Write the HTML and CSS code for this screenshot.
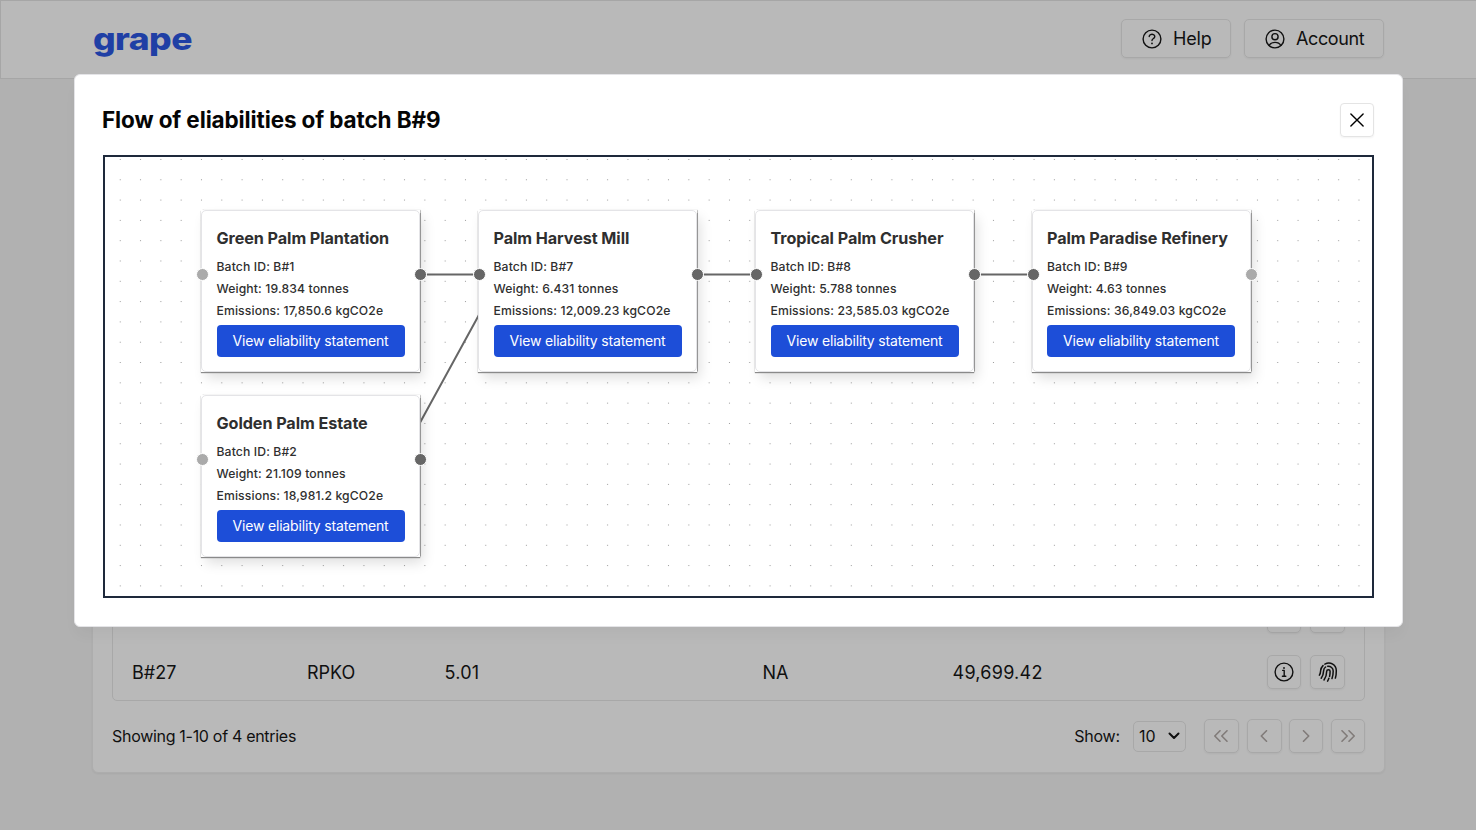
FILE: index.html
```
<!DOCTYPE html>
<html lang="en">
<head>
<meta charset="utf-8">
<title>grape</title>
<link rel="stylesheet" href="styles.css">
</head>
<body>
<div class="page">
  <header class="topbar">
    <div class="logo">grape</div>
    <nav class="topnav">
      <button class="btn help"><svg class="ico20" viewBox="0 0 20 20"><circle cx="10" cy="10" r="8.9"/><path d="M7.200 7.500a2.800 2.300 0 1 1 4.200 2c-1 .6-1.400 1-1.400 2.100"/><circle class="dot" cx="10" cy="14.400" r=".9"/></svg><span>Help</span></button>
      <button class="btn account"><svg class="ico20" viewBox="0 0 20 20"><circle cx="10" cy="10" r="8.9"/><circle cx="10" cy="7.7" r="3.1"/><path d="M4.200 16.400c1.200-2.200 3.200-3 5.800-3s4.600.8 5.800 3"/></svg><span>Account</span></button>
    </nav>
  </header>
  <main class="panel">
    <div class="table">
      <div class="row">
        <span></span><span></span><span></span><span></span><span></span>
        <span class="actions"><button class="sq"></button><button class="sq wide"></button></span>
      </div>
      <div class="row">
        <span>B#27</span><span>RPKO</span><span class="spaced">5.01</span><span>NA</span><span class="spaced">49,699.42</span>
        <span class="actions">
          <button class="sq"><svg class="ico20" viewBox="0 0 20 20"><circle cx="10" cy="10" r="8.9"/><path d="M8.700 8.400h1.500v5.600M8.400 14.200h3.400"/><circle class="dot" cx="10" cy="6" r=".9"/></svg></button>
          <button class="sq wide"><svg class="ico20 print" viewBox="0 0 20 20"><path d="M1.400 13.200C2.500 11.500 2.500 10 2.600 8.700 2.800 6.500 3.700 4.900 5 3.600M6.900 2.100C12.500-.8 18.300 3 18.300 8.700c0 3-.1 5-.9 7.400M3.200 16.200c2-2.600 2.300-4.700 2.400-7.300.1-1.800.8-3.100 2-3.900M9.700 4.300c3-.2 5.500 1.900 5.500 4.800 0 3.300-.4 5.300-1.200 7.500M6 18c2-2.800 2.700-5.300 2.700-8.700 0-2.200 3.400-2.200 3.400 0 0 2-.1 3.400-.5 5M10.900 16.300c-.4 1.100-.8 2-1.300 2.900"/></svg></button>
        </span>
      </div>
    </div>
    <div class="footer">
      <span class="count">Showing 1-10 of 4 entries</span>
      <span class="show">Show:</span>
      <div class="select"><span>10</span><svg viewBox="0 0 12 8"><path d="M1.500 1.500 6 6l4.500-4.500"/></svg></div>
      <div class="pager">
        <button class="sq wide"><svg viewBox="0 0 16 12"><path d="M7 .8 1.800 6 7 11.200M14 .8 8.800 6l5.200 5.200"/></svg></button>
        <button class="sq wide"><svg viewBox="0 0 16 12"><path d="M10.500.8 5.300 6l5.200 5.200"/></svg></button>
        <button class="sq"><svg viewBox="0 0 16 12"><path d="M5.500.8 10.700 6l-5.200 5.200"/></svg></button>
        <button class="sq"><svg viewBox="0 0 16 12"><path d="M2 .8 7.200 6 2 11.200M9 .8 14.200 6 9 11.200"/></svg></button>
      </div>
    </div>
  </main>
</div>

<div class="modal">
  <div class="modal-head">
    <h1>Flow of eliabilities of batch B#9</h1>
    <button class="close"><svg viewBox="0 0 14 14"><path d="M.9.900l12.200 12.200M13.100.900.9 13.100"/></svg></button>
  </div>
  <div class="canvas">
    <svg class="edges" width="1267" height="439">
      <defs><pattern id="dots" x="5.100" y="-7.700" width="20.307" height="20.307" patternUnits="userSpaceOnUse"><circle cx="10.150" cy="10.150" r=".58"/></pattern></defs>
      <rect width="1267" height="439" fill="url(#dots)"/>
      <path d="M322 117.500h46M599 117.500h46M876 117.500h46M314 267.500 375 156"/>
    </svg>
    <article class="node n1">
      <i class="handle in faded"></i><i class="handle out"></i>
      <h2>Green Palm Plantation</h2><p>Batch ID: B#1</p><p>Weight: 19.834 tonnes</p><p>Emissions: 17,850.6 kgCO2e</p><button>View eliability statement</button>
    </article>
    <article class="node n2">
      <i class="handle in faded"></i><i class="handle out"></i>
      <h2>Golden Palm Estate</h2><p>Batch ID: B#2</p><p>Weight: 21.109 tonnes</p><p>Emissions: 18,981.2 kgCO2e</p><button>View eliability statement</button>
    </article>
    <article class="node n3">
      <i class="handle in"></i><i class="handle out"></i>
      <h2>Palm Harvest Mill</h2><p>Batch ID: B#7</p><p>Weight: 6.431 tonnes</p><p>Emissions: 12,009.23 kgCO2e</p><button>View eliability statement</button>
    </article>
    <article class="node n4">
      <i class="handle in"></i><i class="handle out"></i>
      <h2>Tropical Palm Crusher</h2><p>Batch ID: B#8</p><p>Weight: 5.788 tonnes</p><p>Emissions: 23,585.03 kgCO2e</p><button>View eliability statement</button>
    </article>
    <article class="node n5">
      <i class="handle in"></i><i class="handle out faded"></i>
      <h2>Palm Paradise Refinery</h2><p>Batch ID: B#9</p><p>Weight: 4.63 tonnes</p><p>Emissions: 36,849.03 kgCO2e</p><button>View eliability statement</button>
    </article>
  </div>
</div>
</body>
</html>
```
FILE: styles.css
```
* { box-sizing: border-box; }
body { margin: 0; height: 830px; overflow: hidden; background: #b1b1b1; color: #101010; font-family: Inter, sans-serif; font-size: 18px; }
button { font: inherit; color: inherit; margin: 0; padding: 0; background: none; }
svg { display: block; fill: none; stroke: currentColor; stroke-width: 1.4; stroke-linecap: round; stroke-linejoin: round; }
.dot { fill: currentColor; stroke: none; }
.ico20 { width: 20px; height: 20px; flex: none; }
.print { stroke-width: 1.5; }

.page { height: 830px; display: flex; flex-direction: column; }
.topbar { height: 79px; flex: none; display: flex; justify-content: space-between; align-items: flex-start; padding: 18px 92px 0 92px; background: #b9b9b9; border: 1px solid #a6a6a6; border-right: 0; }
.logo { color: #1f3fa5; font-size: 31px; font-weight: 800; line-height: 39px; letter-spacing: -0.5px; transform: scaleX(1.145); transform-origin: 0 0; }
.topnav { display: flex; gap: 13px; }
.btn { height: 39px; display: flex; align-items: center; gap: 11px; padding: 0 0 0 20px; border: 1px solid #a8a8a8; border-radius: 5px; box-shadow: 0 1px 2px rgba(0,0,0,.05); white-space: nowrap; letter-spacing: -.2px; }
.help { width: 110px; }
.account { width: 140px; letter-spacing: -.4px; }

.panel { margin: 30px 91px 0 92px; height: 664px; display: flex; flex-direction: column; justify-content: flex-end; padding: 0 19px 19px; background: #b9b9b9; border: 1px solid #adadad; border-radius: 6px; box-shadow: 0 1px 2px rgba(0,0,0,.05); }
.table { flex: 1; display: flex; flex-direction: column; justify-content: flex-end; margin-bottom: 18px; border: 1px solid #a8a8a8; border-radius: 5px; }
.row { height: 56px; display: grid; grid-template-columns: 175px 137.5px 318px 190px 1fr auto; align-items: center; padding: 0 19px; }
.spaced { letter-spacing: .25px; }
.actions { display: flex; gap: 9px; }
.sq { width: 34px; height: 34px; display: flex; align-items: center; justify-content: center; border: 1px solid #a8a8a8; border-radius: 5px; box-shadow: 0 1px 2px rgba(0,0,0,.05); }
.wide { width: 35px; }
.footer { display: flex; align-items: center; font-size: 16px; letter-spacing: -.3px; }
.count { flex: 1; }
.show { margin-right: 13px; letter-spacing: -.2px; }
.select { width: 53px; height: 31px; display: flex; align-items: center; justify-content: space-between; padding: 0 5px 0 5px; margin-right: 18px; border: 1px solid #a8a8a8; border-radius: 5px; letter-spacing: 0; }
.select svg { width: 12px; height: 8px; stroke-width: 2; }
.pager { display: flex; gap: 7.7px; color: #817b79; }
.pager svg { width: 16px; height: 12px; stroke-width: 1.6; }

.modal { position: absolute; left: 74px; top: 74px; width: 1329px; height: 553px; padding: 28px; background: #fff; border: 1px solid #e4e4e7; border-radius: 6px; box-shadow: 0 10px 15px -3px rgba(0,0,0,.04); }
.modal-head { height: 34px; margin-bottom: 18px; display: flex; justify-content: space-between; align-items: center; }
h1 { margin: 0 0 2px -1px; font-size: 22.5px; font-weight: 650; letter-spacing: -.12px; color: #050505; }
.close { width: 34px; height: 34px; display: flex; align-items: center; justify-content: center; border: 1px solid #e4e4e4; border-radius: 4px; box-shadow: 0 1px 2px rgba(0,0,0,.05); }
.close svg { width: 14px; height: 14px; color: #000; }
.canvas { position: relative; height: 443px; border: 2px solid #1e293b; overflow: hidden; }
.edges { stroke: #666; stroke-width: 2; stroke-linecap: butt; }
.edges circle { fill: #888; stroke: none; }
.edges rect { stroke: none; }
.node { position: absolute; width: 219px; height: 162px; padding: 16px 15.5px; background: #fff; color: #2f2f2f; box-shadow: 0 1px 1px #8a8a8a, .5px 0 1px #999, 4px 7px 12px -1px rgba(0,0,0,.13); }
.node::before { content: ""; position: absolute; inset: 0; border: 1px solid #e4e4e7; border-radius: 5px; }
.n1 { left: 96px; top: 53px; }
.n2 { left: 96px; top: 238px; }
.n3 { left: 373px; top: 53px; }
.n4 { left: 650px; top: 53px; }
.n5 { left: 926.5px; top: 53px; }
h2 { margin: 0 0 5px; font-size: 16.2px; line-height: 25px; font-weight: 650; letter-spacing: -.08px; white-space: nowrap; }
.node p { margin: 0; font-size: 12.2px; line-height: 22px; font-weight: 500; letter-spacing: .12px; white-space: nowrap; }
.node button { display: block; width: 188px; height: 32px; margin-top: 3px; padding-bottom: 1px; border: 0; border-radius: 4px; background: #1d4ed8; color: #fff; font-size: 14px; letter-spacing: -.17px; white-space: nowrap; }
.handle { position: absolute; top: 57.5px; width: 13px; height: 13px; border-radius: 50%; background: #666; border: 1px solid #fff; }
.in { left: -5px; }
.out { right: -7px; }
.faded { background: #aaa; }
```
